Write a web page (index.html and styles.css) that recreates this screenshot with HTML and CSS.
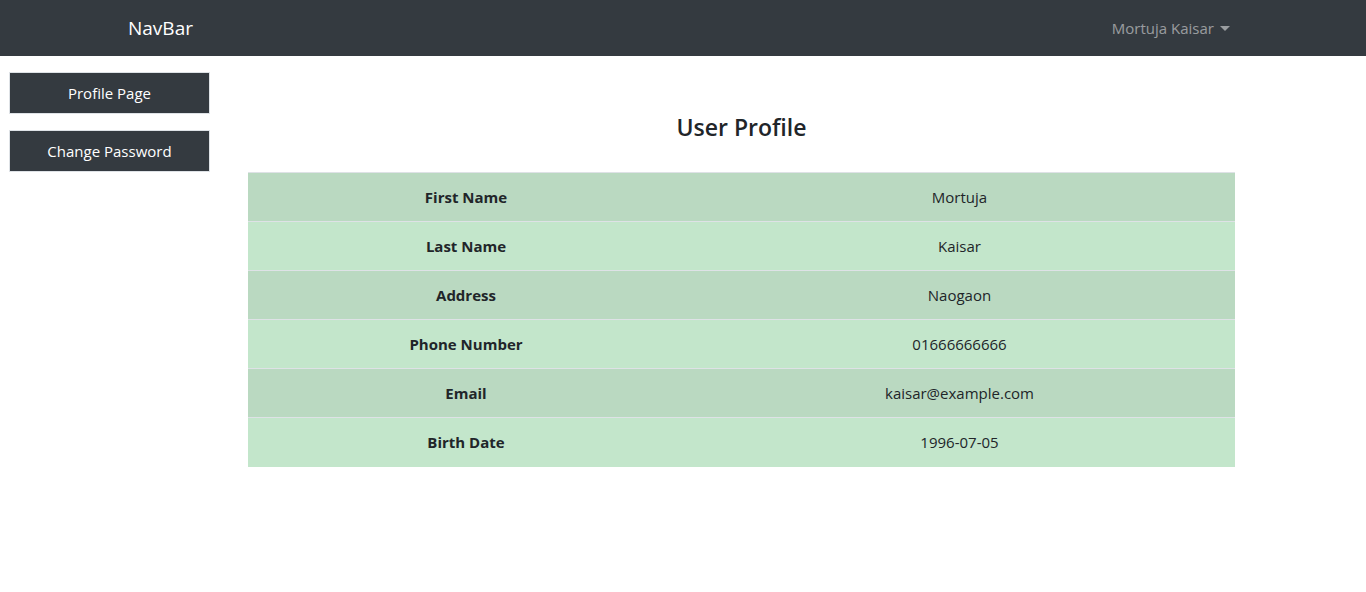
FILE: index.html
```html
<!DOCTYPE html>
<html>
<head>
<meta charset="utf-8">
<link rel="stylesheet" href="styles.css">
</head>
<body>
<nav class="navbar">
  <div class="nav-inner">
    <a class="brand">NavBar</a>
    <a class="user-toggle">Mortuja Kaisar <span class="caret"></span></a>
  </div>
</nav>
<div class="layout">
  <aside class="sidebar">
    <button class="side-btn">Profile Page</button>
    <button class="side-btn">Change Password</button>
  </aside>
  <main class="main">
    <h4 class="title">User Profile</h4>
    <table class="profile">
      <tr><th>First Name</th><td>Mortuja</td></tr>
      <tr><th>Last Name</th><td>Kaisar</td></tr>
      <tr><th>Address</th><td>Naogaon</td></tr>
      <tr><th>Phone Number</th><td>01666666666</td></tr>
      <tr><th>Email</th><td>kaisar@example.com</td></tr>
      <tr><th>Birth Date</th><td>1996-07-05</td></tr>
    </table>
  </main>
</div>
</body>
</html>
```
FILE: styles.css
```css
* { box-sizing: border-box; }
body {
  margin: 0;
  font-family: "Open Sans", "Noto Sans", sans-serif;
  font-size: 16px;
  color: #212529;
  background: #fff;
}
.navbar {
  background: #343a40;
  height: 56px;
}
.nav-inner {
  width: 1140px;
  margin: 0 auto;
  padding: 0 15px;
  height: 56px;
  display: flex;
  align-items: center;
  justify-content: space-between;
}
.brand {
  color: #fff;
  font-size: 19px;
  line-height: 1;
}
.user-toggle {
  color: rgba(255,255,255,.5);
  font-size: 15px;
  padding: 8px;
  display: flex;
  align-items: center;
}
.caret {
  display: inline-block;
  margin-left: 6px;
  border-top: 5px solid rgba(255,255,255,.5);
  border-left: 5px solid transparent;
  border-right: 5px solid transparent;
  width: 0;
  height: 0;
}
.layout {
  display: flex;
  align-items: flex-start;
}
.sidebar {
  display: flex;
  flex-direction: column;
  gap: 16px;
  padding: 16px 0 0 9px;
  width: 248px;
}
.side-btn {
  width: 201px;
  height: 42px;
  background: #343a40;
  border: 1px solid #dee2e6;
  color: #fff;
  font-family: inherit;
  font-size: 15px;
  padding: 0;
}
.main {
  width: 987px;
  padding-top: 57px;
}
.title {
  margin: 0 0 30px;
  text-align: center;
  font-size: 23px;
  font-weight: 600;
  line-height: 29px;
}
.profile {
  width: 100%;
  border-collapse: collapse;
  font-size: 15px;
}
.profile tr { background: #c3e6cb; }
.profile tr:nth-child(odd) { background: #bad9c1; }
.profile th, .profile td {
  height: 49px;
  text-align: center;
  vertical-align: middle;
  border-top: 1px solid #dee2e6;
  padding: 0 12px;
}
.profile th {
  width: 436px;
  font-weight: 700;
}
.profile td { font-weight: 400; }
```
